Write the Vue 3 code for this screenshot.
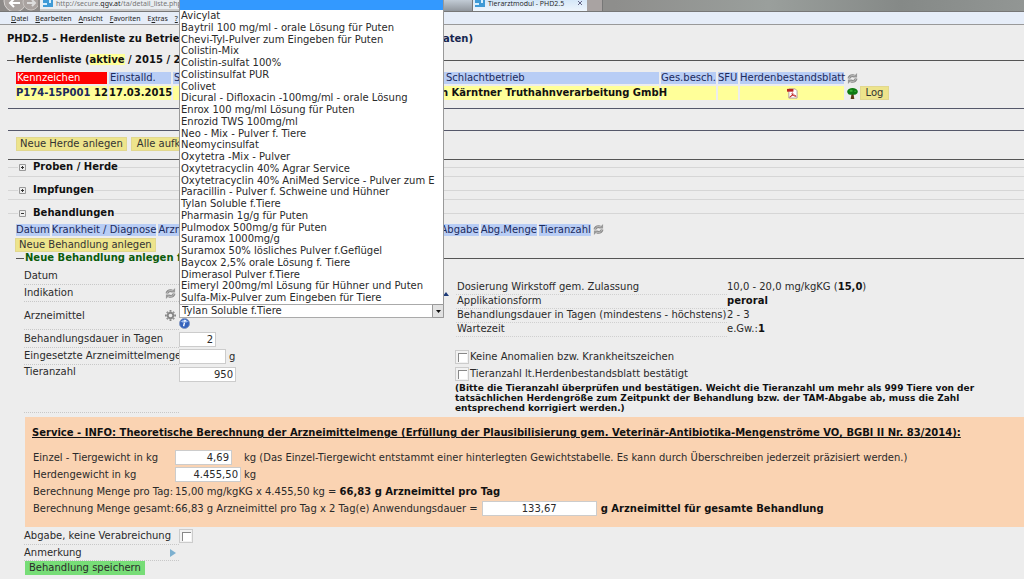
<script setup>
import { ref } from 'vue'

const medicines = [
  'Avicylat',
  'Baytril 100 mg/ml - orale Lösung für Puten',
  'Chevi-Tyl-Pulver zum Eingeben für Puten',
  'Colistin-Mix',
  'Colistin-sulfat 100%',
  'Colistinsulfat PUR',
  'Colivet',
  'Dicural - Difloxacin -100mg/ml - orale Lösung',
  'Enrox 100 mg/ml Lösung für Puten',
  'Enrozid TWS 100mg/ml',
  'Neo - Mix - Pulver f. Tiere',
  'Neomycinsulfat',
  'Oxytetra -Mix - Pulver',
  'Oxytetracyclin 40% Agrar Service',
  'Oxytetracyclin 40% AniMed Service - Pulver zum E',
  'Paracillin - Pulver f. Schweine und Hühner',
  'Tylan Soluble f.Tiere',
  'Pharmasin 1g/g für Puten',
  'Pulmodox 500mg/g für Puten',
  'Suramox 1000mg/g',
  'Suramox 50% lösliches Pulver f.Geflügel',
  'Baycox 2,5% orale Lösung f. Tiere',
  'Dimerasol Pulver f.Tiere',
  'Eimeryl 200mg/ml Lösung für Hühner und Puten',
  'Sulfa-Mix-Pulver zum Eingeben für Tiere',
]
const selected = ref('Tylan Soluble f.Tiere')
const days = ref('2')
const amount = ref('')
const animals = ref('950')
const single = ref('4,69')
const herd = ref('4.455,50')
const total = ref('133,67')
</script>

<template>
  <div class="window">
    <header class="chrome">
      <div class="nav">
        <svg class="arrows" viewBox="0 0 38 11" aria-hidden="true">
          <circle cx="15" cy="1" r="11" fill="#a9a3a0" stroke="#d8d4d1" />
          <circle cx="31" cy="2" r="8" fill="#aaa3a0" stroke="#c8c4c1" />
          <path d="M20 3H10m4-4-4 4 4 4" fill="none" stroke="#fff" stroke-width="2" />
          <path d="M27 3h8m-3-3 3 3-3 3" fill="none" stroke="#ddd" stroke-width="2" />
        </svg>
        <div class="address">
          <svg class="fav" viewBox="0 0 10 8" aria-hidden="true">
            <path d="M0 0h10v7H0z" fill="#3f9ad6" /><path d="M0 3h4v2H0zM6 0h2v3H6z" fill="#d6efff" />
          </svg>
          <span>http://secure.<b>qgv.at</b>/ta/detail_liste.php?b</span>
        </div>
      </div>
      <div class="tab-end"></div>
      <div class="tab">
        <svg class="fav" viewBox="0 0 10 8" aria-hidden="true">
          <path d="M0 0h10v7H0z" fill="#3f9ad6" /><path d="M0 3h4v2H0zM6 0h2v3H6z" fill="#d6efff" />
        </svg>
        <span class="tab-name">Tierarztmodul - PHD2.5</span>
        <svg class="tab-x" viewBox="0 0 6 6" aria-hidden="true"><path d="M1 1l4 4M5 1 1 5" stroke="#668" /></svg>
      </div>
      <div class="tab-new"></div>
    </header>
    <nav class="menu">
      <span><u>D</u>atei</span><span><u>B</u>earbeiten</span><span><u>A</u>nsicht</span><span><u>F</u>avoriten</span><span>E<u>x</u>tras</span><span><u>?</u></span>
    </nav>

    <main>
      <h1 class="title"><span class="title-a">PHD2.5 - Herdenliste zu Betrieb</span><a href="#">aten)</a></h1>

      <div class="legend dark"><b>Herdenliste (<mark>aktive</mark> / 2015 / 2</b></div>
      <div class="herds">
        <table>
          <colgroup><col class="c1" /><col class="c2" /><col class="c3" /><col class="c4" /><col class="c5" /><col class="c6" /><col class="c7" /><col class="c8" /><col class="c9" /></colgroup>
          <thead>
            <tr>
              <th class="red">Kennzeichen</th><th>Einstalld.</th><th>S</th><th class="pad">Schlachtbetrieb</th><th>Ges.besch.</th><th>SFU</th><th>Herdenbestandsblatt</th>
              <td class="plain">
                <svg class="ic" viewBox="0 0 12 12"><path d="M2 6Q3 2 8 3M10 6Q9 10 4 9" fill="none" stroke="#888" stroke-width="3" /><path d="M2 6Q3 2 8 3M10 6Q9 10 4 9" fill="none" stroke="#c4c4c4" /><path d="M11 0v5H6zM1 12V7h5z" fill="#999" /></svg>
              </td>
              <td class="plain"></td>
            </tr>
          </thead>
          <tbody>
            <tr>
              <td><a href="#">P174-15P001</a> 12</td><td>17.03.2015</td><td></td><td class="plant">h Kärntner Truthahnverarbeitung GmbH</td><td></td><td></td>
              <td class="mid">
                <svg class="ic" viewBox="0 0 12 12"><path d="M2 1h7l2 2v8H2z" fill="#fff" stroke="#a99" /><path d="M0 1h7v3H0z" fill="#b22" /><path d="M3 10c3-1 4-4 3-5M5 6c1 2 3 3 5 3M3 10c2-3 5-3 7-1" fill="none" stroke="#b22" /></svg>
              </td>
              <td class="plain">
                <svg class="ic" viewBox="0 0 12 12"><path d="M5 6h2l1 6H4z" fill="#5b3a14" /><path d="M2 1Q6-1 10 1q3 2 1 5-2 2-5 1-4 1-5-1-2-3 1-5z" fill="#0d7a12" /><path d="M3 2h3v2H3zM8 3h2v1H8z" fill="#37b034" /></svg>
              </td>
              <td class="plain last"><button class="yb log" type="button">Log</button></td>
            </tr>
          </tbody>
        </table>
      </div>
      <hr class="rule r1" />
      <hr class="rule r2" />
      <div class="buttons">
        <button class="yb" type="button">Neue Herde anlegen</button>
        <button class="yb cut" type="button">Alle aufk</button>
      </div>
      <hr class="rule r3" />

      <section class="fold">
        <h2><svg class="pm" viewBox="0 0 9 9"><path d="M1.500 1.500h6v6h-6z" fill="#eee" stroke="#999" /><path d="M3 4.500h3M4.500 3v3" stroke="#333" /></svg><span>Proben / Herde</span></h2>
      </section>
      <section class="fold">
        <h2><svg class="pm" viewBox="0 0 9 9"><path d="M1.500 1.500h6v6h-6z" fill="#eee" stroke="#999" /><path d="M3 4.500h3M4.500 3v3" stroke="#333" /></svg><span>Impfungen</span></h2>
      </section>
      <section class="fold open">
        <h2><svg class="pm" viewBox="0 0 9 9"><path d="M1.500 1.500h6v6h-6z" fill="#eee" stroke="#999" /><path d="M3 4.500h3" stroke="#333" /></svg><span>Behandlungen</span></h2>
      </section>

      <div class="heads">
        <span>Datum</span><span>Krankheit / Diagnose</span><span class="wide">Arzn</span><span>Abgabe</span><span>Abg.Menge</span><span>Tieranzahl</span>
        <svg class="ic" viewBox="0 0 12 12"><path d="M2 6Q3 2 8 3M10 6Q9 10 4 9" fill="none" stroke="#888" stroke-width="3" /><path d="M2 6Q3 2 8 3M10 6Q9 10 4 9" fill="none" stroke="#c4c4c4" /><path d="M11 0v5H6zM1 12V7h5z" fill="#999" /></svg>
      </div>
      <div class="newrow"><button class="yb" type="button">Neue Behandlung anlegen</button></div>
      <div class="legend green"><b>Neue Behandlung anlegen fü</b></div>

      <div class="form">
        <div class="left">
          <div class="row h18"><span class="lab">Datum</span></div>
          <div class="row h17">
            <span class="lab">Indikation
              <svg class="ic" viewBox="0 0 12 12"><path d="M2 6Q3 2 8 3M10 6Q9 10 4 9" fill="none" stroke="#888" stroke-width="3" /><path d="M2 6Q3 2 8 3M10 6Q9 10 4 9" fill="none" stroke="#c4c4c4" /><path d="M11 0v5H6zM1 12V7h5z" fill="#999" /></svg>
            </span>
            <svg class="up" viewBox="0 0 6 4"><path d="M0 4 3 0l3 4z" fill="#1c3a78" /></svg>
          </div>
          <div class="row h28">
            <label class="lab" for="med">Arzneimittel
              <svg class="ic" viewBox="0 0 12 12"><circle cx="6" cy="6" r="3" fill="none" stroke="#888" stroke-width="2" /><path d="M6 0v2M6 10v2M0 6h2M10 6h2M2 2l1 1M9 9l1 1M10 2 9 3M3 9l-1 1" stroke="#888" stroke-width="2" /></svg>
            </label>
            <div class="medicine">
              <div class="combo">
                <select id="med" v-model="selected"><option v-for="m in medicines" :key="m">{{ m }}</option></select>
                <svg class="arrow" viewBox="0 0 12 14" aria-hidden="true"><path d="M.5.5h11v13H.5z" fill="#e2e2e2" stroke="#999" /><path d="M4 6h5L6.500 9z" fill="#111" /></svg>
                <div class="popup">
                  <div class="blank"></div>
                  <ul><li v-for="m in medicines" :key="m">{{ m }}</li></ul>
                </div>
              </div>
              <svg class="info" viewBox="0 0 12 12"><circle cx="6" cy="6" r="5.500" fill="#3563bd" stroke="#8296bd" /><path d="M2 4q4-4 8 0-4 2-8 0z" fill="#9dbcf0" /><path d="M6 5 5 9M7 2 6 4" stroke="#fff" stroke-width="1.500" /></svg>
            </div>
          </div>
          <div class="row h18"><label class="lab" for="days">Behandlungsdauer in Tagen</label><input id="days" v-model="days" class="w37" /></div>
          <div class="row h17"><label class="lab" for="amount">Eingesetzte Arzneimittelmenge</label><input id="amount" v-model="amount" class="w47" /><span class="unit">g</span></div>
          <div class="row h48"><label class="lab top" for="animals">Tieranzahl</label><input id="animals" v-model="animals" class="w57" /></div>
        </div>
        <div class="rightcol">
          <dl>
            <div><dt>Dosierung Wirkstoff gem. Zulassung</dt><dd>10,0 - 20,0 mg/kgKG (<b>15,0</b>)</dd></div>
            <div><dt>Applikationsform</dt><dd><b>peroral</b></dd></div>
            <div><dt>Behandlungsdauer in Tagen (mindestens - höchstens)</dt><dd>2 - 3</dd></div>
            <div><dt>Wartezeit</dt><dd>e.Gw.:<b>1</b></dd></div>
          </dl>
          <label class="check"><input type="checkbox" /><span>Keine Anomalien bzw. Krankheitszeichen</span></label>
          <label class="check"><input type="checkbox" /><span>Tieranzahl lt.Herdenbestandsblatt bestätigt</span></label>
          <p class="warn">(Bitte die Tieranzahl überprüfen und bestätigen. Weicht die Tieranzahl um mehr als 999 Tiere von der tatsächlichen Herdengröße zum Zeitpunkt der Behandlung bzw. der TAM-Abgabe ab, muss die Zahl entsprechend korrigiert werden.)</p>
        </div>
      </div>

      <section class="service">
        <h3>Service - INFO: Theoretische Berechnung der Arzneimittelmenge (Erfüllung der Plausibilisierung gem. Veterinär-Antibiotika-Mengenströme VO, BGBl II Nr. 83/2014):</h3>
        <div class="srow"><label class="slab" for="single">Einzel - Tiergewicht in kg</label><span class="sfield"><input id="single" v-model="single" class="w57" /></span><span>kg (Das Einzel-Tiergewicht entstammt einer hinterlegten Gewichtstabelle. Es kann durch Überschreiben jederzeit präzisiert werden.)</span></div>
        <div class="srow"><label class="slab" for="herd">Herdengewicht in kg</label><span class="sfield"><input id="herd" v-model="herd" class="w66" /></span><span>kg</span></div>
        <div class="srow"><span class="slab">Berechnung Menge pro Tag:</span><span>15,00 mg/kgKG x 4.455,50 kg = <b>66,83 g Arzneimittel pro Tag</b></span></div>
        <div class="srow"><span class="slab">Berechnung Menge gesamt:</span><label for="total">66,83 g Arzneimittel pro Tag x 2 Tag(e) Anwendungsdauer =</label><input id="total" v-model="total" class="w115" /><b>g Arzneimittel für gesamte Behandlung</b></div>
      </section>

      <div class="after">
        <div class="row h18"><label class="lab" for="give">Abgabe, keine Verabreichung</label><input id="give" type="checkbox" /></div>
        <div class="row h16"><span class="lab">Anmerkung <svg class="play" viewBox="0 0 6 8"><path d="M0 0l6 4-6 4z" fill="#7db0cf" /></svg></span></div>
        <button class="save" type="button">Behandlung speichern</button>
      </div>
    </main>
  </div>
</template>

<style>
body { background: #ededed; overflow: hidden; }
</style>

<style scoped>
* { box-sizing: border-box; }
.window { position: relative; font: 10px/12px "DejaVu Sans", Verdana, sans-serif; color: #2a2a2a; white-space: nowrap; }
b, h1, h2, h3 { font-size: 10px; font-weight: bold; color: #111; }
a { color: #1b2a5c; text-decoration: none; }
svg { display: block; flex: none; }
input, button, select { font: inherit; color: inherit; }

.chrome { display: flex; height: 12px; background: linear-gradient(90deg, #8e8e8c 60%, #9a9f9c 75%, #858987 88%, #929694); border-bottom: 1px solid #777; overflow: hidden; }
.nav { width: 443px; display: flex; background: #8d8a88; }
.arrows { width: 38px; height: 11px; margin-right: 2px; }
.address { flex: 1; display: flex; gap: 3px; padding-left: 3px; background: #e9edf1; border-bottom: 2px solid #c9c9c9; font: 7px/8px "Noto Sans", sans-serif; color: #777; }
.address b { color: #222; font-size: 7px; font-weight: normal; }
.fav { width: 10px; height: 8px; }
.tab-end { width: 30px; background: linear-gradient(#c2cbd5, #90969d); border-right: 1px solid #777; }
.tab { width: 114px; display: flex; gap: 3px; padding: 0 4px 0 2px; background: linear-gradient(#d5e7f8, #eef5fc); font: 7px/8px "Open Sans", sans-serif; color: #222; }
.tab-name { flex: 1; }
.tab-x { width: 6px; height: 6px; }
.tab-new { width: 16px; background: #a9a3a2; border-right: 1px solid #777; }
.menu { display: flex; gap: 7px; height: 13px; padding-left: 11px; background: #e6edf8; border-bottom: 1px solid #999; font: 7px/13px "Noto Sans", sans-serif; color: #222; }

.title { display: flex; margin: 0; padding: 7px 0 9px 7px; line-height: 13px; }
.title-a { flex: 0 0 436px; }
.title a { color: #16264f; }
.legend { display: flex; align-items: center; gap: 1px; padding-left: 7px; height: 12px; }
.legend::before { content: ""; width: 8px; height: 1px; background: #555; }
.legend::after { content: ""; flex: 1; height: 1px; background: #555; }
.legend mark { background: #ffff99; color: inherit; }
.legend.green { padding-left: 16px; }
.legend.green b { color: #0b5c0b; }

.herds { padding: 4px 0 0 14px; }
table { table-layout: fixed; width: 877px; border-spacing: 2px; }
.c1 { width: 91px; } .c2 { width: 62px; } .c3 { width: 264px; } .c4 { width: 220px; } .c5 { width: 55px; } .c6 { width: 20px; } .c7 { width: 104px; } .c8 { width: 12px; } .c9 { width: 29px; }
th, td { padding: 0 0 0 1px; height: 12px; line-height: 12px; text-align: left; }
th { background: #b8cdf5; color: #1b2a5c; font-weight: normal; }
th:nth-child(n + 5) { padding-left: 0; }
th.red { background: #f00; color: #fff; }
th.pad { padding-left: 7px; }
tbody td { height: 14px; background: #ffff99; font-weight: bold; color: #111; }
tbody td:first-child, tbody td:nth-child(2) { padding-left: 0; }
tbody td.plant { padding-left: 2px; }
thead td.plain, tbody td.plain { background: none; font-weight: normal; }
tbody td.last { padding-left: 0; }
td.mid svg { margin: 0 auto; }
.ic { width: 11px; height: 11px; }
.rule { margin: 0 0 0 8px; height: 1px; border: 0; background: #55586a; }
.r1 { margin-top: 6px; } .r2 { margin-top: 21px; } .r3 { background: #555; }
.buttons { display: flex; gap: 4px; padding: 6px 0 8px 16px; }
.yb { height: 14px; padding: 0 3px; line-height: 12px; border: 1px solid #e2d88e; background: #ede48c; color: #333; }
.log { width: 29px; padding: 0; display: block; }
.cut { width: 90px; padding: 0 5px; text-align: left; }

.fold { margin-left: 8px; height: 17px; margin-bottom: 6px; border-bottom: 1px solid #d6d6d6; }
.fold.open { border: 0; margin-bottom: 1px; }
.fold h2 { display: flex; align-items: center; margin: 0; line-height: 14px; }
.fold h2::before { content: ""; width: 10px; height: 1px; background: #d6d6d6; }
.fold h2::after { content: ""; flex: 1; height: 1px; background: #d6d6d6; }
.pm { width: 9px; height: 9px; margin-right: 6px; }
.heads { display: flex; gap: 2px; padding-left: 16px; color: #1b2a5c; }
.heads span { background: #b8cdf5; }
.heads .wide { width: 280px; }
.newrow { padding: 2px 0 0 15px; }
.newrow .yb { display: block; }

.form { display: flex; padding-top: 3px; }
.left { flex: 0 0 455px; padding-left: 24px; }
.row { display: flex; align-items: center; }
.lab { width: 155px; align-self: stretch; display: flex; align-items: center; justify-content: space-between; padding-right: 3px; border-bottom: 1px dotted #c8c8c8; }
.lab.top { align-items: flex-start; padding-top: 1px; }
.h16 { height: 16px; } .h17 { height: 17px; } .h18 { height: 18px; } .h28 { height: 28px; } .h48 { height: 48px; align-items: flex-start; }
.h48 input { margin-top: 2px; }
.unit { margin-left: 3px; }
.up { width: 6px; height: 4px; margin-left: 264px; }
.combo { position: relative; width: 265px; }
.combo select { display: block; width: 100%; height: 14px; padding: 0 0 0 2px; appearance: none; border: 1px solid #aaa; border-radius: 0; background: #fff; line-height: 12px; }
.arrow { position: absolute; right: 0; top: 0; width: 12px; height: 14px; pointer-events: none; }
.popup { position: absolute; left: 0; right: 0; bottom: 100%; background: #fff; border: 1px solid #999; border-width: 0 1px; }
.blank { height: 10px; background: #3399ff; }
.popup ul { display: grid; grid-auto-rows: 1fr; height: 294px; margin: 0; padding: 0 0 0 1px; list-style: none; }
.popup li { min-height: 0; }
.medicine { align-self: flex-start; padding-top: 2px; }
.info { width: 11px; height: 11px; }
input { height: 15px; padding: 0 2px; border: 1px solid #ccc; background: #fff; text-align: right; }
.w37 { width: 37px; } .w47 { width: 47px; } .w57 { width: 57px; } .w66 { width: 66px; } .w115 { width: 115px; text-align: center; }
input[type="checkbox"] { appearance: none; flex: none; width: 14px; height: 14px; margin: 0; padding: 0; border: 1px solid #ccc; background: linear-gradient(#fff, #fff) 3px 3px / 8px 8px no-repeat, linear-gradient(#888, #888) 2px 2px / 9px 9px no-repeat, #f2f2f2; }

.rightcol { flex: 1; padding-top: 14px; }
dl { margin: 0 0 13px 1px; }
dl div { display: flex; height: 14px; }
dt { width: 271px; padding-left: 1px; border-bottom: 1px dotted #d0d0d0; }
dd { margin: 0; }
.check { display: flex; align-items: center; gap: 1px; margin-bottom: 3px; }
.warn { margin: -1px 0 0; font-size: 9px; line-height: 10px; font-weight: bold; color: #111; white-space: normal; }

.service { margin: 4px 0 0 25px; padding: 9px 0 10px 7px; background: #fad3b2; }
h3 { margin: 0 0 9px; text-decoration: underline; line-height: 14px; }
.srow { display: flex; align-items: center; height: 17px; }
.slab { width: 143px; padding-left: 1px; }
.sfield { width: 69px; display: flex; }
.w115 { margin: 0 4px; }
.after { padding-left: 24px; }
.play { width: 6px; height: 8px; }
.save { display: block; height: 14px; margin-left: 1px; padding: 0 4px; border: 0; background: #77dd77; line-height: 14px; }
</style>
